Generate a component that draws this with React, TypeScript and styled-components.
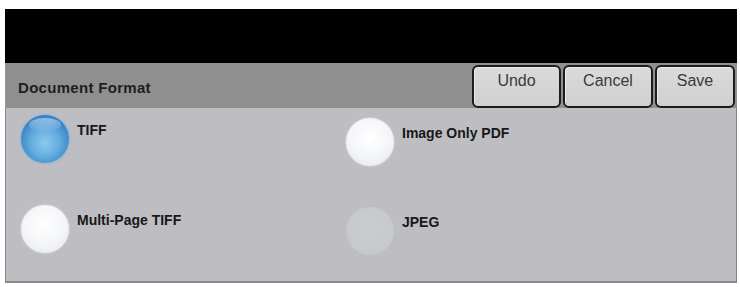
import React from "react";
import styled, { createGlobalStyle, css } from "styled-components";

const Global = createGlobalStyle`
  html, body { margin: 0; padding: 0; background: #ffffff; }
  body { font-family: "Liberation Sans", Arial, sans-serif; }
`;

const Screen = styled.div`
  margin: 9px 3px 0 5px;
  width: 732px;
  display: flex;
  flex-direction: column;
`;

const TitleBar = styled.div`
  height: 54px;
  background: #000000;
`;

const Header = styled.div`
  height: 45px;
  background: #8f8f8f;
  display: flex;
  align-items: flex-start;
  border-left: 1px solid #9a9a9a;
  box-sizing: border-box;
`;

const HeaderTitle = styled.div`
  flex: 1;
  padding: 16px 0 0 12px;
  font-size: 15px;
  font-weight: bold;
  color: #1e1e1e;
  letter-spacing: 0.3px;
`;

const ButtonGroup = styled.div`
  display: flex;
  gap: 2px;
  padding: 2px 2px 0 0;
`;

const ActionButton = styled.button<{ $w: number }>`
  width: ${(p) => p.$w}px;
  height: 43px;
  box-sizing: border-box;
  border: 2px solid #1c1c1c;
  border-radius: 6px;
  background: linear-gradient(#dadada, #d0d0d0);
  box-shadow: inset 1px 1px 0 #ececec;
  font-family: "Liberation Sans", Arial, sans-serif;
  font-size: 16px;
  color: #3a3a3a;
  padding: 5px 0 0;
  display: flex;
  justify-content: center;
  align-items: flex-start;
`;

const Content = styled.div`
  height: 175px;
  box-sizing: border-box;
  background: #bebdc1;
  border: 1px solid #858585;
  border-top: none;
  border-bottom: 2px solid #8a8a8a;
  display: grid;
  grid-template-columns: 325px 1fr;
  grid-template-rows: 48px 48px;
  row-gap: 42px;
  padding: 7px 0 0 15px;
`;

const Option = styled.div<{ $dy: number }>`
  display: flex;
  align-items: flex-start;
  gap: 8px;
  margin-top: ${(p) => p.$dy}px;
`;

type RadioState = "selected" | "idle" | "disabled";

const Radio = styled.div<{ $state: RadioState }>`
  position: relative;
  width: 48px;
  height: 48px;
  border-radius: 50%;
  flex: none;
  ${(p) =>
    p.$state === "selected"
      ? css`
          background: radial-gradient(circle at 50% 58%, #8ccaef 0%, #62abdf 40%, #3682c6 72%, #2163a6 90%, #2d70b2 100%);
          box-shadow: 0 0 2px 1px rgba(130, 180, 225, 0.8);
          &::after {
            content: "";
            position: absolute;
            left: 8px;
            top: 3px;
            width: 32px;
            height: 14px;
            border-radius: 50%;
            background: linear-gradient(rgba(255, 255, 255, 0.45), rgba(255, 255, 255, 0));
          }
        `
      : p.$state === "idle"
      ? css`
          background: radial-gradient(circle at 50% 40%, #ffffff 0%, #f3f5f8 55%, #e2e6ea 100%);
          box-shadow: 0 0 2px rgba(255, 255, 255, 0.7);
        `
      : css`
          background: radial-gradient(circle at 50% 45%, #c9cdce 0%, #c5c9ca 70%, #c0c4c5 100%);
        `}
`;

const Label = styled.span`
  margin-top: 7px;
  font-size: 14px;
  line-height: 16px;
  font-weight: bold;
  color: #181818;
`;

const options: { label: string; state: RadioState; dy: number }[] = [
  { label: "TIFF", state: "selected", dy: 0 },
  { label: "Image Only PDF", state: "idle", dy: 3 },
  { label: "Multi-Page TIFF", state: "idle", dy: 0 },
  { label: "JPEG", state: "disabled", dy: 2 },
];

export default function App() {
  return (
    <>
      <Global />
      <Screen>
        <TitleBar />
        <Header>
          <HeaderTitle>Document Format</HeaderTitle>
          <ButtonGroup>
            <ActionButton $w={89}>Undo</ActionButton>
            <ActionButton $w={90}>Cancel</ActionButton>
            <ActionButton $w={80}>Save</ActionButton>
          </ButtonGroup>
        </Header>
        <Content>
          {options.map((o) => (
            <Option key={o.label} $dy={o.dy}>
              <Radio $state={o.state} />
              <Label>{o.label}</Label>
            </Option>
          ))}
        </Content>
      </Screen>
    </>
  );
}
